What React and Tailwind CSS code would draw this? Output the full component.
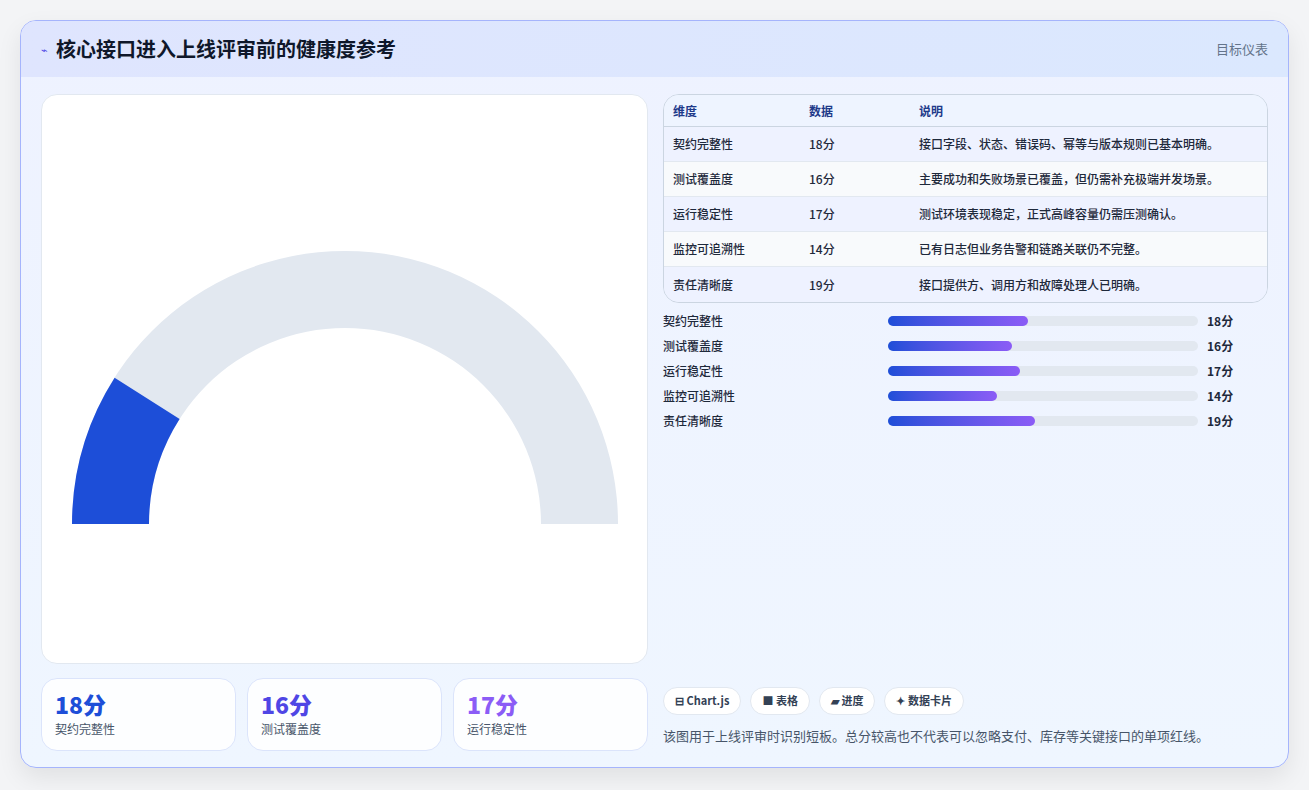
import React from "react";

const rows = [
  ["契约完整性", "18分", "接口字段、状态、错误码、幂等与版本规则已基本明确。", 18],
  ["测试覆盖度", "16分", "主要成功和失败场景已覆盖，但仍需补充极端并发场景。", 16],
  ["运行稳定性", "17分", "测试环境表现稳定，正式高峰容量仍需压测确认。", 17],
  ["监控可追溯性", "14分", "已有日志但业务告警和链路关联仍不完整。", 14],
  ["责任清晰度", "19分", "接口提供方、调用方和故障处理人已明确。", 19],
];

export default function App() {
  return (
    <div className="w-[1309px] h-[790px] bg-[#f3f4f6] p-5 pb-[22px]" style={{ fontFamily: '"Noto Sans CJK SC", "Noto Sans", sans-serif' }}>
      <div className="h-full rounded-2xl border border-[#a5b4fc] bg-gradient-to-b from-[#eef2ff] to-[#eff6ff] shadow-[0_10px_25px_rgba(0,0,0,0.08)] overflow-hidden flex flex-col">
        <div className="h-[56px] shrink-0 bg-gradient-to-r from-[#dfe5fe] to-[#dbe8fe] flex items-center justify-between px-5">
          <div className="flex items-center gap-2">
            <span className="text-[#4f46e5] text-[11px]">⌁</span>
            <span className="text-[20px] font-bold text-[#0f172a]">核心接口进入上线评审前的健康度参考</span>
          </div>
          <span className="text-[13px] text-[#64748b]">目标仪表</span>
        </div>
        <div className="flex-1 flex gap-[15px] px-5 pt-[17px] pb-[18px]">
          <div className="w-[607px] flex flex-col gap-[14px]">
            <div className="h-[570px] bg-white rounded-2xl border border-[#e2e8f0]">
              <svg width="607" height="569">
                <path d="M30 429 A273 273 0 0 1 576 429 L499 429 A196 196 0 0 0 107 429 Z" fill="#e2e8f0" />
                <path d="M30 429 A273 273 0 0 1 72.6 282.7 L137.6 323.9 A196 196 0 0 0 107 429 Z" fill="#1d4ed8" />
              </svg>
            </div>
            <div className="grid grid-cols-3 gap-[11px]">
              {[["18分", "契约完整性", "text-[#1d4ed8]"], ["16分", "测试覆盖度", "text-[#4f46e5]"], ["17分", "运行稳定性", "text-[#8b5cf6]"]].map(([v, l, c]) => (
                <div key={l} className="h-[73px] bg-white/90 rounded-2xl border border-[#dbe4fb] px-[13px] pt-[10px]">
                  <div className={`text-[23px] font-extrabold leading-[30px] ${c}`}>{v}</div>
                  <div className="text-[12px] text-[#475569] mt-[1px]">{l}</div>
                </div>
              ))}
            </div>
          </div>
          <div className="w-[607px] flex flex-col justify-between">
            <div>
              <div className="rounded-2xl border border-[#cbd5e1] overflow-hidden text-[12px] text-[#1e293b] font-medium">
                <div className="flex h-[32px] items-center bg-[#eef4ff] border-b border-[#cbd5e1] text-[#1e3a8a] font-semibold">
                  <div className="w-[145px] pl-[9px]">维度</div>
                  <div className="w-[110px]">数据</div>
                  <div>说明</div>
                </div>
                {rows.map((r, i) => (
                  <div key={r[0]} className={`flex h-[35px] items-center ${i % 2 === 0 ? "bg-[#eef2ff]" : "bg-[#f8fafc]"} ${i < 4 ? "border-b border-[#e2e8f0]" : ""}`}>
                    <div className="w-[145px] pl-[9px]">{r[0]}</div>
                    <div className="w-[110px]">{r[1]}</div>
                    <div>{r[2]}</div>
                  </div>
                ))}
              </div>
              <div className="mt-[9px] flex flex-col gap-[7px] text-[12px] text-[#1e293b] font-medium">
                {rows.map((r) => (
                  <div key={r[0]} className="flex items-center h-[18px]">
                    <div className="w-[225px]">{r[0]}</div>
                    <div className="w-[310px] h-[10px] rounded-full bg-[#e2e8f0]">
                      <div className="h-full rounded-full bg-gradient-to-r from-[#1d4ed8] to-[#8b5cf6]" style={{ width: `${(r[3] / 40) * 100}%` }} />
                    </div>
                    <div className="ml-[9px] font-bold">{r[1]}</div>
                  </div>
                ))}
              </div>
            </div>
            <div>
              <div className="flex gap-[9px] text-[11px] font-semibold text-[#334155]">
                {["⊟ Chart.js", "■ 表格", "▰ 进度", "✦ 数据卡片"].map((t) => (
                  <span key={t} className="h-[28px] px-[11px] flex items-center rounded-full bg-white border border-[#e2e8f0]">{t}</span>
                ))}
              </div>
              <div className="mt-[11px] text-[13px] text-[#475569] mb-[6px]">该图用于上线评审时识别短板。总分较高也不代表可以忽略支付、库存等关键接口的单项红线。</div>
            </div>
          </div>
        </div>
      </div>
    </div>
  );
}
